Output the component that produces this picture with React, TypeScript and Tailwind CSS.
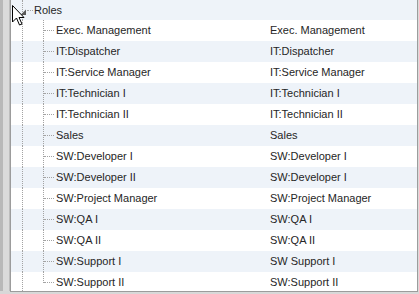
import React from 'react';

const roles: [string, string][] = [
    ['Exec. Management', 'Exec. Management'],
    ['IT:Dispatcher', 'IT:Dispatcher'],
    ['IT:Service Manager', 'IT:Service Manager'],
    ['IT:Technician I', 'IT:Technician I'],
    ['IT:Technician II', 'IT:Technician II'],
    ['Sales', 'Sales'],
    ['SW:Developer I', 'SW:Developer I'],
    ['SW:Developer II', 'SW:Developer I'],
    ['SW:Project Manager', 'SW:Project Manager'],
    ['SW:QA I', 'SW:QA I'],
    ['SW:QA II', 'SW:QA II'],
    ['SW:Support I', 'SW Support I'],
    ['SW:Support II', 'SW:Support II'],
];

const font = { fontFamily: '"Liberation Sans", Arial, sans-serif' };

// outer guide column (x=22), runs through every row
const OuterGuide: React.FC<{ children?: React.ReactNode }> = ({ children }) => (
    <div className="relative w-[22px] h-full shrink-0 pl-[11px]">
        <div className="h-full border-l border-dotted border-[#a3a3a3]" />
        {children}
    </div>
);

const App: React.FC = () => {
    return (
        <div className="w-[419px] h-[294px] flex flex-col bg-[#d8d8d8] overflow-hidden" style={font}>
            <div className="flex flex-1 min-h-0">
                <div className="w-[3px] bg-[#b8b8b8]" />
                <div className="w-[6px] bg-[#dadada]" />
                <div className="w-px bg-[#bdbdbd]" />
                <div className="w-px bg-[#9c9c9c]" />
                <div className="relative flex-1 overflow-hidden bg-white text-[11px] text-[#262626]">
                    {/* parent row */}
                    <div className="flex h-[20px] items-center bg-[#eef3f9]">
                        <OuterGuide>
                            <svg className="absolute left-[9px] top-[9px]" width="7" height="7" viewBox="0 0 7 7">
                                <path d="M6 0.5 L6 6 L0.5 6 Z" fill="#595959" />
                            </svg>
                        </OuterGuide>
                        <div className="w-[6px] h-px border-t border-dotted border-[#a3a3a3] ml-[-6px]" />
                        <span className="ml-[1px]">Roles</span>
                    </div>
                    {roles.map(([name, value], i) => {
                        const last = i === roles.length - 1;
                        return (
                            <div
                                key={name}
                                className={`flex h-[21px] items-center ${i % 2 === 1 ? 'bg-[#eef3f9]' : 'bg-white'}`}
                            >
                                <OuterGuide />
                                <div className="flex w-[23px] h-full shrink-0 pl-[10px]">
                                    <div className="flex flex-col h-full">
                                        <div className={`border-l border-dotted border-[#a3a3a3] ${last ? 'h-[11px]' : 'h-full'}`} />
                                    </div>
                                    <div className="w-[10px] h-px mt-[10px] border-t border-dotted border-[#a3a3a3]" />
                                </div>
                                <div className="w-[214px] shrink-0 whitespace-nowrap">{name}</div>
                                <div className="whitespace-nowrap">{value}</div>
                            </div>
                        );
                    })}
                    {/* mouse pointer over the tree */}
                    <svg className="absolute left-0 top-[4px]" width="14" height="23" viewBox="0 0 14 23">
                        <path
                            d="M1.5 1.5 L1.5 18 L5.5 14 L8.5 21 L11 20 L8 13.5 L13 13.5 Z"
                            fill="#fff"
                            stroke="#000"
                            strokeWidth="1"
                            strokeLinejoin="miter"
                        />
                    </svg>
                </div>
                <div className="w-px bg-[#9c9c9c]" />
                <div className="w-px bg-[#dadada]" />
            </div>
            <div className="h-px bg-[#9c9c9c] ml-[10px] mr-px" />
            <div className="h-[2px] bg-[#d8d8d8]" />
        </div>
    );
};

export default App;
